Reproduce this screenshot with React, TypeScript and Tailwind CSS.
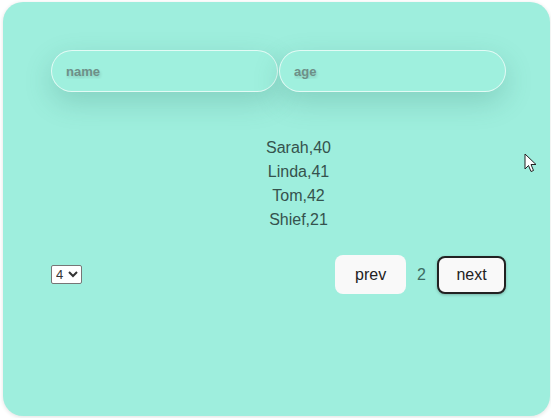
import React from "react";

const people = [
  { name: "Sarah", age: 40 },
  { name: "Linda", age: 41 },
  { name: "Tom", age: 42 },
  { name: "Shief", age: 21 },
];

export default function App() {
  return (
    <main className="relative min-h-screen bg-white pt-[2px] pl-[3px] font-['Liberation_Sans',Arial,sans-serif]">
      <div className="w-[547px] h-[414px] rounded-[20px] bg-[#9eeedd] shadow-[0_1px_4px_rgba(0,0,0,0.12)] pt-[48px] pl-[48px]">
        {/* inputs */}
        <div className="flex gap-[1px]">
          <input
            placeholder="name"
            className="w-[227px] h-[42px] rounded-full bg-[#9ff0de] border border-white/70 pl-[14px] text-[13px] font-semibold outline-none placeholder:text-[#6e8f88] shadow-[0_10px_28px_rgba(40,110,95,0.22)] [text-shadow:1px_2px_3px_rgba(0,0,0,0.15)]"
          />
          <input
            placeholder="age"
            className="w-[227px] h-[42px] rounded-full bg-[#9ff0de] border border-white/70 pl-[14px] text-[13px] font-semibold outline-none placeholder:text-[#6e8f88] shadow-[0_10px_28px_rgba(40,110,95,0.22)] [text-shadow:1px_2px_3px_rgba(0,0,0,0.15)]"
          />
        </div>

        {/* list */}
        <ul className="w-[495px] mt-[44px] text-center text-[16px] leading-[24px] text-[#35524d]">
          {people.map((p) => (
            <li key={p.name}>
              {p.name},{p.age}
            </li>
          ))}
        </ul>

        {/* controls */}
        <div className="w-[455px] mt-[23px] flex items-center justify-between">
          <select className="h-[19px] w-[31px] bg-white border border-[#767676] rounded-[2px] text-[13px] text-[#333]">
            <option>4</option>
          </select>
          <div className="flex items-center">
            <button className="w-[71px] h-[39px] rounded-[8px] bg-[#f9f9f9] text-[16px] text-[#222]">
              prev
            </button>
            <span className="mx-[11px] text-[16px] text-[#3d6b63]">2</span>
            <button className="w-[69px] h-[38px] rounded-[8px] bg-[#f9f9f9] border-2 border-[#222] text-[16px] text-[#222] shadow-[0_1px_3px_rgba(0,0,0,0.25)]">
              next
            </button>
          </div>
        </div>
      </div>

      {/* mouse cursor */}
      <svg
        className="absolute left-[524px] top-[153px]"
        width="13"
        height="20"
        viewBox="0 0 13 20"
      >
        <path
          d="M1 1 L1 16 L4.5 12.5 L7 18.5 L9.5 17.5 L7 11.5 L12 11.5 Z"
          fill="white"
          stroke="#222"
          strokeWidth="1"
          strokeLinejoin="round"
        />
      </svg>
    </main>
  );
}
